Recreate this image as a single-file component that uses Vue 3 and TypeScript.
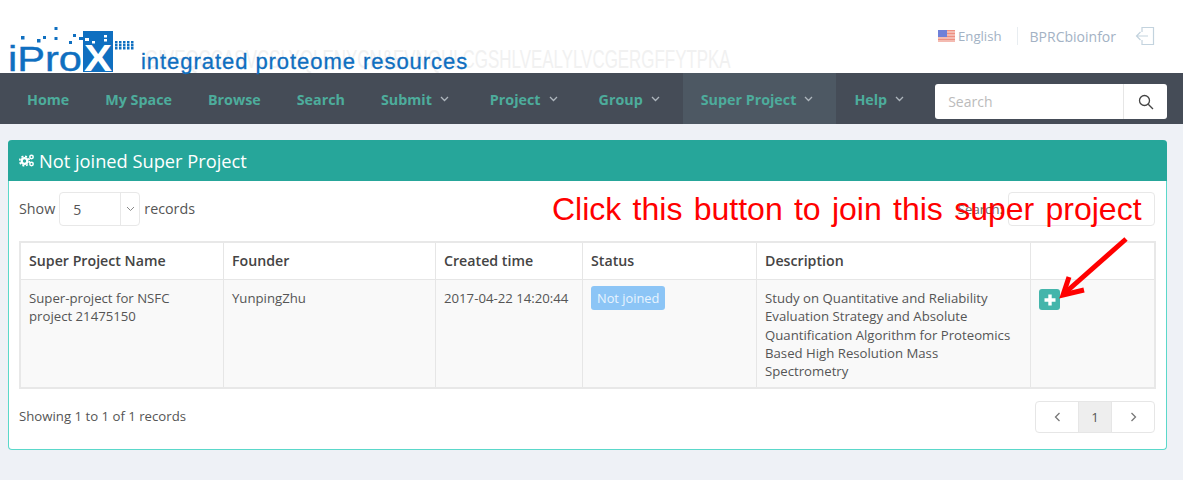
<template>
  <div class="page">
    <header class="top">
      <div class="brand">
        <span class="watermark">GIVEQCCASVCSLYQLENYCN&amp;EVNQHLCGSHLVEALYLVCGERGFFYTPKA</span>
        <svg class="logo" width="140" height="80" viewBox="0 0 140 80">
          <g fill="#0f6fc0">
            <rect x="21" y="36" width="3.500" height="3.500" />
            <rect x="37" y="39" width="3.500" height="3.500" />
            <rect x="43" y="36" width="3" height="3" />
            <rect x="54.500" y="27" width="3" height="3" />
            <rect x="54.500" y="37" width="3" height="3" />
            <rect x="69" y="41" width="3" height="3" />
            <rect x="73" y="34" width="3" height="3" />
            <rect x="79" y="37" width="4" height="3" />
            <rect x="83" y="31" width="30" height="41" />
            <rect v-for="d in dots" :key="d.x + '-' + d.y" :x="d.x" :y="d.y" width="2.500" height="2.500" />
          </g>
          <g fill="#fff">
            <rect x="85" y="38" width="4" height="3" />
            <rect x="92" y="41" width="3" height="2.500" />
            <rect x="104" y="35" width="3" height="2.500" />
            <rect x="104" y="39" width="3" height="2.500" />
          </g>
          <text x="8" y="70.500" class="logo-word" textLength="74" lengthAdjust="spacingAndGlyphs">iPro</text>
          <text x="84" y="71" class="logo-x" textLength="28" lengthAdjust="spacingAndGlyphs">X</text>
        </svg>
        <span class="tagline">integrated proteome resources</span>
      </div>
      <div class="account">
        <svg class="flag" width="17" height="12" viewBox="0 0 17 12">
          <rect width="17" height="12" fill="#ee8f80" />
          <path d="M0 2h17M0 5h17M0 8h17M0 11h17" stroke="#f9e6e2" />
          <rect width="9" height="7" fill="#6f80d8" />
        </svg>
        <span class="lang">English</span>
        <span class="user">BPRCbioinfor</span>
        <svg class="logout" width="20" height="20" viewBox="0 0 20 20" fill="none" stroke="#c3d3de" stroke-width="1.200">
          <path d="M7 6V1.500H18.500V18.500H7V14" />
          <path d="M13 10H1.500M5.500 6L1.500 10L5.500 14" />
        </svg>
      </div>
    </header>

    <nav class="nav">
      <a v-for="item in navItems" :key="item.label" class="nav-item" :class="{ active: item.active, caret: item.caret }">
        {{ item.label }}
        <svg v-if="item.caret" width="9" height="6" viewBox="0 0 9 6" fill="none" stroke="#aeb6bd" stroke-width="1.300">
          <path d="M1 1L4.500 4.500L8 1" />
        </svg>
      </a>
      <div class="nav-search">
        <span class="nav-search-input">Search</span>
        <span class="nav-search-btn">
          <svg width="16" height="16" viewBox="0 0 16 16" fill="none" stroke="#444" stroke-width="1.300">
            <circle cx="6.500" cy="6.500" r="5" />
            <path d="M10.200 10.200L15 15" />
          </svg>
        </span>
      </div>
    </nav>

    <main class="content">
      <section class="panel">
        <h2 class="panel-head">
          <svg width="16" height="13" viewBox="0 0 16 13" fill="none" stroke="#fff">
            <circle cx="5.500" cy="7" r="2.800" stroke-width="2.200" />
            <circle cx="5.500" cy="7" r="4.800" stroke-width="1.600" stroke-dasharray="2 1.770" />
            <circle cx="12.500" cy="3" r="1.700" stroke-width="1.500" />
            <circle cx="12.500" cy="10" r="1.700" stroke-width="1.500" />
          </svg>
          Not joined Super Project
        </h2>
        <div class="panel-body">
          <div class="toolbar">
            <div class="length">
              Show
              <span class="select"><span class="select-value">5</span><span class="select-arrow"><svg width="9" height="6" viewBox="0 0 9 6" fill="none" stroke="#888" stroke-width="1"><path d="M1 1L4.500 4.500L8 1" /></svg></span></span>
              records
            </div>
            <div class="filter">
              <span>Search:</span>
              <span class="filter-input"></span>
            </div>
          </div>

          <table class="table">
            <thead>
              <tr>
                <th class="c1">Super Project Name</th>
                <th class="c2">Founder</th>
                <th class="c3">Created time</th>
                <th class="c4">Status</th>
                <th class="c5">Description</th>
                <th></th>
              </tr>
            </thead>
            <tbody>
              <tr>
                <td>Super-project for NSFC project 21475150</td>
                <td>YunpingZhu</td>
                <td>2017-04-22 14:20:44</td>
                <td><span class="badge">Not joined</span></td>
                <td class="desc">Study on Quantitative and Reliability Evaluation Strategy and Absolute Quantification Algorithm for Proteomics Based High Resolution Mass Spectrometry</td>
                <td>
                  <span class="join">
                    <svg width="12" height="12" viewBox="0 0 12 12" fill="#fff"><path d="M4.300 0.500H7.700V4.300H11.500V7.700H7.700V11.500H4.300V7.700H0.500V4.300H4.300Z" /></svg>
                  </span>
                </td>
              </tr>
            </tbody>
          </table>

          <div class="footer">
            <span>Showing 1 to 1 of 1 records</span>
            <div class="pager">
              <span class="page-btn side">
                <svg width="7" height="10" viewBox="0 0 7 10" fill="none" stroke="#777" stroke-width="1.300"><path d="M5.500 1L1.500 5L5.500 9" /></svg>
              </span>
              <span class="page-btn current">1</span>
              <span class="page-btn side">
                <svg width="7" height="10" viewBox="0 0 7 10" fill="none" stroke="#777" stroke-width="1.300"><path d="M1.500 1L5.500 5L1.500 9" /></svg>
              </span>
            </div>
          </div>
        </div>
      </section>
    </main>

    <!-- annotation drawn over the screenshot -->
    <span class="note">Click this button to join this super project</span>
    <svg class="note-arrow" width="80" height="70" viewBox="0 0 80 70" fill="none" stroke="#f00" stroke-width="5">
      <path d="M69 3L9 56" />
      <path d="M12 41L6 59L27 54" />
    </svg>
  </div>
</template>

<script setup lang="ts">
const navItems = [
  { label: "Home" },
  { label: "My Space" },
  { label: "Browse" },
  { label: "Search" },
  { label: "Submit", caret: true },
  { label: "Project", caret: true },
  { label: "Group", caret: true },
  { label: "Super Project", caret: true, active: true },
  { label: "Help", caret: true },
];

const dots: { x: number; y: number }[] = [];
for (let col = 0; col < 5; col++) {
  for (let row = 0; row < 3; row++) {
    dots.push({ x: 115 + col * 4, y: 41 + row * 3 });
  }
}
</script>

<style>
html, body {
  margin: 0;
  background: #eef1f6;
}
</style>

<style scoped>
.page {
  position: relative;
  width: 1183px;
  height: 480px;
  overflow: hidden;
  background: #eef1f6;
  font-family: "Open Sans", "Liberation Sans", sans-serif;
  font-size: 13.200px;
  color: #555;
}

.top {
  height: 73px;
  background: #fff;
  display: flex;
  justify-content: space-between;
}

.brand {
  position: relative;
  width: 740px;
}

.logo {
  position: absolute;
  left: 0;
  top: 0;
}

.logo-word {
  font-family: "Liberation Sans", sans-serif;
  font-size: 35px;
  fill: #0f6fc0;
  stroke: #0f6fc0;
  stroke-width: 0.400px;
}

.logo-x {
  font-family: "Liberation Sans", sans-serif;
  font-size: 36px;
  font-weight: 700;
  fill: #fff;
}

.tagline {
  position: absolute;
  left: 141px;
  top: 49px;
  font-family: "Liberation Sans", sans-serif;
  font-size: 22px;
  line-height: 26px;
  letter-spacing: 0.950px;
  -webkit-text-stroke: 0.300px #0f6fc0;
  color: #0f6fc0;
  white-space: nowrap;
}

.watermark {
  position: absolute;
  left: 145px;
  top: 45px;
  font-family: "Liberation Sans", sans-serif;
  font-size: 25px;
  line-height: 28px;
  color: #f1f1f1;
  white-space: nowrap;
  transform: scaleX(0.677);
  transform-origin: left center;
}

.account {
  display: flex;
  align-items: center;
  height: 72px;
  padding-right: 28px;
  color: #a3b2c4;
}

.flag {
  margin-right: 3px;
}

.lang {
  padding-right: 15px;
  border-right: 1px solid #e8edf1;
  line-height: 18px;
}

.user {
  margin-left: 12px;
  margin-right: 19px;
  font-size: 14px;
}

.nav {
  height: 51px;
  background: #454c57;
  display: flex;
  align-items: stretch;
  padding-left: 9px;
}

.nav-item {
  display: flex;
  align-items: center;
  gap: 8px;
  padding: 1px 18px 0;
  box-sizing: border-box;
  height: 51px;
  font-size: 14.300px;
  font-weight: 700;
  color: #4dac9c;
  white-space: nowrap;
}

.nav-item.caret {
  padding-right: 23px;
}

.nav-item.active {
  background: #4d5863;
}

.nav-search {
  display: flex;
  width: 232px;
  height: 35px;
  margin: 11px 0 0 8px;
  background: #fff;
  border-radius: 3px;
}

.nav-search-input {
  flex: 1;
  padding-left: 13px;
  line-height: 36px;
  font-size: 14px;
  color: #bbb;
  border-right: 1px solid #e6e6e6;
}

.nav-search-btn {
  width: 43px;
  display: flex;
  align-items: center;
  justify-content: center;
}

.content {
  padding: 16px 16px 0 8px;
}

.panel {
  height: 310px;
  box-sizing: border-box;
  border-radius: 4px;
  background: #fff;
  border: 1px solid #5ad8ca;
  border-top: none;
}

.panel-head {
  display: flex;
  align-items: center;
  gap: 4px;
  height: 41px;
  margin: 0 -1px;
  padding: 0 11px;
  border-radius: 4px 4px 0 0;
  background: #26a69a;
  color: #fff;
  font-size: 18.250px;
  font-weight: 400;
}

.panel-body {
  padding: 11px 11px 0 10px;
}

.toolbar {
  display: flex;
  justify-content: space-between;
  height: 34px;
  margin-bottom: 15px;
}

.length {
  display: flex;
  align-items: center;
  gap: 4px;
  font-size: 14.300px;
  line-height: 32px;
}

.select {
  display: flex;
  width: 81px;
  height: 34px;
  box-sizing: border-box;
  border: 1px solid #e8e8e8;
  border-radius: 4px;
}

.select-value {
  flex: 1;
  padding-left: 13px;
  line-height: 33px;
  font-size: 14px;
}

.select-arrow {
  width: 18px;
  display: flex;
  align-items: center;
  justify-content: center;
  border-left: 1px solid #e8e8e8;
}

.filter {
  display: flex;
  align-items: center;
  gap: 5px;
  color: #666;
}

.filter-input {
  width: 147px;
  height: 34px;
  box-sizing: border-box;
  border: 1px solid #e8e8e8;
  border-radius: 4px;
}

.table {
  width: 1137px;
  table-layout: fixed;
  border-collapse: collapse;
  border: 2px solid #e8e8e8;
  line-height: 18.250px;
}

.table th,
.table td {
  border: 1px solid #e6e6e6;
  padding: 0 8px;
  text-align: left;
  vertical-align: top;
}

.table th {
  height: 36px;
  vertical-align: middle;
  font-size: 14.200px;
  font-weight: 600;
  color: #444;
}

.table td {
  padding-top: 9px;
  padding-bottom: 7px;
  background: #f9f9f9;
}

.table td.desc {
  padding-right: 18px;
}

.c1 { width: 186px; }
.c2 { width: 195px; }
.c3 { width: 130px; }
.c4 { width: 157px; }
.c5 { width: 257px; }

.badge {
  display: inline-block;
  padding: 0 6px;
  height: 24px;
  line-height: 24px;
  margin-top: -3px;
  border-radius: 3px;
  background: #8cc5f6;
  color: #e8f4fe;
  font-size: 12.800px;
}

.join {
  display: flex;
  align-items: center;
  justify-content: center;
  width: 21px;
  height: 21px;
  border-radius: 3px;
  background: #44b5ab;
}

.footer {
  display: flex;
  justify-content: space-between;
  align-items: flex-start;
  margin-top: 12px;
}

.footer > span {
  line-height: 31px;
}

.pager {
  display: flex;
  height: 32px;
  box-sizing: border-box;
  border: 1px solid #e6e6e6;
  border-radius: 4px;
  overflow: hidden;
}

.page-btn {
  display: flex;
  align-items: center;
  justify-content: center;
}

.page-btn.side {
  width: 42px;
}

.page-btn.current {
  width: 32px;
  background: #eee;
  border-left: 1px solid #e6e6e6;
  border-right: 1px solid #e6e6e6;
}

.note {
  position: absolute;
  left: 552px;
  top: 190px;
  font-family: "Liberation Sans", sans-serif;
  font-size: 32px;
  line-height: 38px;
  word-spacing: 2.400px;
  color: #f00;
  white-space: nowrap;
}

.note-arrow {
  position: absolute;
  left: 1057px;
  top: 236px;
}
</style>
